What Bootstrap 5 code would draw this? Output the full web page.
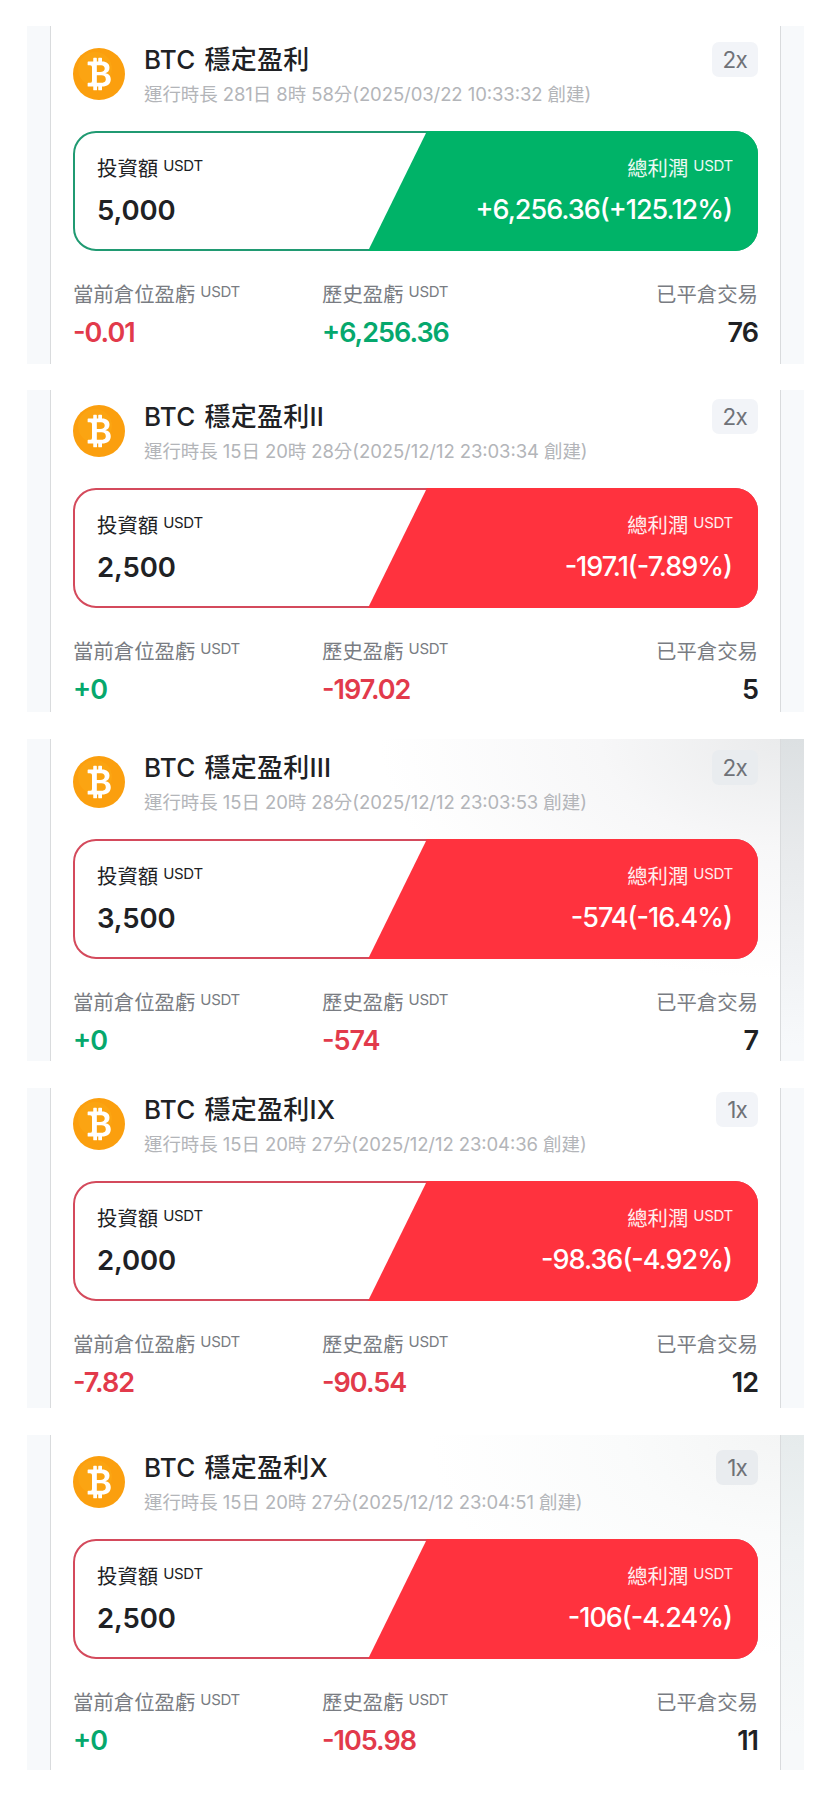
<!DOCTYPE html>
<html lang="zh-Hant">
<head>
<meta charset="utf-8">
<meta name="viewport" content="width=device-width, initial-scale=1">
<title>BTC 穩定盈利</title>
<link href="https://cdn.jsdelivr.net/npm/bootstrap@5.3.0/dist/css/bootstrap.min.css" rel="stylesheet">
<style>
body{background:#fff;color:#202124;font-family:Inter,"Noto Sans CJK TC",sans-serif;font-feature-settings:"case";padding:26px 26px 26px 27px}
.bot-frame{background:#f7f9fb;padding:0 23px;overflow:hidden;margin-bottom:27px}
.bot-body{background:#fff;border:solid #d9dbdd;border-width:0 1px;padding:0 22px;height:100%}
.h-a{height:338px;margin-bottom:26px}.h-a .bot-body{padding-top:16px}
.h-b{height:322px}.h-b .bot-body{padding-top:9px}
.h-c{height:322px}.h-c .bot-body{padding-top:11px}
.h-d{height:320px}.h-d .bot-body{padding-top:4px}
.h-e{height:335px;margin-bottom:0}.h-e .bot-body{padding-top:15px}
.h-c{background:linear-gradient(180deg,#dce0e2,#e8eaec 35%,#f7f9fb 95%)}
.h-c .bot-body{background:radial-gradient(ellipse 400px 240px at 100% 0,#eaebec,#f7f7f8 45%,#fff)}
.h-e{background:linear-gradient(180deg,#e6ebec,#eff3f4 35%,#f7f9fa 90%)}
.h-e .bot-body{background:radial-gradient(ellipse 350px 220px at 100% 0,#f4f5f5,#fafbfb 45%,#fff)}
.bot-frame.h-c,.bot-frame.h-e{background-size:50% 100%;background-position:right;background-repeat:no-repeat;background-color:#f7f9fb}
.bot-head{height:89px}
.coin{width:52px;height:52px;margin-top:6px;margin-right:19px}
.bot-title{font-size:26px;line-height:36px;font-weight:500;white-space:nowrap;letter-spacing:.2px;word-spacing:2px}
.bot-time{font-size:18.5px;line-height:28px;color:#b3b5b9;white-space:nowrap;margin-top:2px;letter-spacing:-.08px}
.lever{background:#f2f4f8;color:#6f7278;border-radius:7px;height:35px;line-height:35px;font-size:22.5px;letter-spacing:-.8px;padding:0 11px}
.h-c .lever,.h-e .lever{background:#e9ecef}
.panel{--tone:#00b368;--edge:#209a72;height:120px;border:2px solid var(--edge);border-radius:23px;position:relative;padding:21px 23px 0 22px;background:#fff}
.panel.down{--tone:#ff323e;--edge:#d44a5c}
.panel::before{content:"";position:absolute;inset:-2px;border-radius:23px;background:var(--tone);clip-path:polygon(354px 0,100% 0,100% 100%,295px 100%)}
.panel>*{position:relative}
.lbl{font-size:20.4px;line-height:30px;height:30px;white-space:nowrap}
.unit{font-size:15px;position:relative;top:-5px;margin-left:5px;letter-spacing:-.3px}
.num{font-size:27.5px;line-height:36px;font-weight:600;white-space:nowrap;letter-spacing:-.1px}
.panel .num{margin-top:8px}
.panel .text-end .num{font-size:27px;letter-spacing:-1px;margin-right:1px;font-weight:500}
.panel .text-end .lbl{opacity:.92}
.stats{padding-top:29px}
.stats .lbl{color:#797c82}
.stats .num{font-size:27px;margin-top:5px;letter-spacing:-1px}
.stats>:first-child{width:249px}
.pos{color:#06a86d}.neg{color:#e23a4b}
</style>
</head>
<body>
<svg class="d-none">
<symbol id="btc" viewBox="0 0 52 52"><circle cx="26" cy="26" r="26" fill="#fb9f0e"/><circle cx="22" cy="21" r="17" fill="#fdaf1b" opacity=".35"/><path fill="#fff" transform="translate(6.5 6)scale(2.5)" d="M5.5 13v1.25c0 .138.112.25.25.25h1a.25.25 0 0 0 .25-.25V13h.5v1.25c0 .138.112.25.25.25h1a.25.25 0 0 0 .25-.25V13h.084c1.992 0 3.416-1.033 3.416-2.82 0-1.502-1.007-2.323-2.186-2.44v-.088c.97-.242 1.683-.974 1.683-2.19C11.997 3.93 10.847 3 9.092 3H9V1.75a.25.25 0 0 0-.25-.25h-1a.25.25 0 0 0-.25.25V3h-.573V1.75a.25.25 0 0 0-.25-.25H5.75a.25.25 0 0 0-.25.25V3l-1.998.011a.25.25 0 0 0-.25.25v.989c0 .137.11.25.248.25l.755-.005a.75.75 0 0 1 .745.75v5.505a.75.75 0 0 1-.75.75l-.748.011a.25.25 0 0 0-.25.25v1c0 .138.112.25.25.25L5.5 13zm1.427-8.513h1.719c.906 0 1.438.498 1.438 1.312 0 .871-.575 1.362-1.877 1.362h-1.28V4.487zm0 4.051h1.84c1.137 0 1.756.58 1.756 1.524 0 .953-.626 1.45-2.158 1.45H6.927V8.539z"/></symbol>
</svg>

<section class="bot-frame h-a"><div class="bot-body">
 <div class="bot-head d-flex align-items-start"><svg class="coin flex-shrink-0"><use href="#btc"/></svg>
  <div class="flex-grow-1"><div class="bot-title">BTC 穩定盈利</div><div class="bot-time">運行時長 281日 8時 58分(2025/03/22 10:33:32 創建)</div></div><span class="lever">2x</span></div>
 <div class="panel d-flex justify-content-between"><div><div class="lbl">投資額<span class="unit">USDT</span></div><div class="num">5,000</div></div>
  <div class="text-end text-white"><div class="lbl">總利潤<span class="unit">USDT</span></div><div class="num">+6,256.36(+125.12%)</div></div></div>
 <div class="stats d-flex"><div><div class="lbl">當前倉位盈虧<span class="unit">USDT</span></div><div class="num neg">-0.01</div></div>
  <div><div class="lbl">歷史盈虧<span class="unit">USDT</span></div><div class="num pos">+6,256.36</div></div>
  <div class="ms-auto text-end"><div class="lbl">已平倉交易</div><div class="num">76</div></div></div>
</div></section>

<section class="bot-frame h-b"><div class="bot-body">
 <div class="bot-head d-flex align-items-start"><svg class="coin flex-shrink-0"><use href="#btc"/></svg>
  <div class="flex-grow-1"><div class="bot-title">BTC 穩定盈利II</div><div class="bot-time">運行時長 15日 20時 28分(2025/12/12 23:03:34 創建)</div></div><span class="lever">2x</span></div>
 <div class="panel down d-flex justify-content-between"><div><div class="lbl">投資額<span class="unit">USDT</span></div><div class="num">2,500</div></div>
  <div class="text-end text-white"><div class="lbl">總利潤<span class="unit">USDT</span></div><div class="num">-197.1(-7.89%)</div></div></div>
 <div class="stats d-flex"><div><div class="lbl">當前倉位盈虧<span class="unit">USDT</span></div><div class="num pos">+0</div></div>
  <div><div class="lbl">歷史盈虧<span class="unit">USDT</span></div><div class="num neg">-197.02</div></div>
  <div class="ms-auto text-end"><div class="lbl">已平倉交易</div><div class="num">5</div></div></div>
</div></section>

<section class="bot-frame h-c"><div class="bot-body">
 <div class="bot-head d-flex align-items-start"><svg class="coin flex-shrink-0"><use href="#btc"/></svg>
  <div class="flex-grow-1"><div class="bot-title">BTC 穩定盈利III</div><div class="bot-time">運行時長 15日 20時 28分(2025/12/12 23:03:53 創建)</div></div><span class="lever">2x</span></div>
 <div class="panel down d-flex justify-content-between"><div><div class="lbl">投資額<span class="unit">USDT</span></div><div class="num">3,500</div></div>
  <div class="text-end text-white"><div class="lbl">總利潤<span class="unit">USDT</span></div><div class="num">-574(-16.4%)</div></div></div>
 <div class="stats d-flex"><div><div class="lbl">當前倉位盈虧<span class="unit">USDT</span></div><div class="num pos">+0</div></div>
  <div><div class="lbl">歷史盈虧<span class="unit">USDT</span></div><div class="num neg">-574</div></div>
  <div class="ms-auto text-end"><div class="lbl">已平倉交易</div><div class="num">7</div></div></div>
</div></section>

<section class="bot-frame h-d"><div class="bot-body">
 <div class="bot-head d-flex align-items-start"><svg class="coin flex-shrink-0"><use href="#btc"/></svg>
  <div class="flex-grow-1"><div class="bot-title">BTC 穩定盈利IX</div><div class="bot-time">運行時長 15日 20時 27分(2025/12/12 23:04:36 創建)</div></div><span class="lever">1x</span></div>
 <div class="panel down d-flex justify-content-between"><div><div class="lbl">投資額<span class="unit">USDT</span></div><div class="num">2,000</div></div>
  <div class="text-end text-white"><div class="lbl">總利潤<span class="unit">USDT</span></div><div class="num">-98.36(-4.92%)</div></div></div>
 <div class="stats d-flex"><div><div class="lbl">當前倉位盈虧<span class="unit">USDT</span></div><div class="num neg">-7.82</div></div>
  <div><div class="lbl">歷史盈虧<span class="unit">USDT</span></div><div class="num neg">-90.54</div></div>
  <div class="ms-auto text-end"><div class="lbl">已平倉交易</div><div class="num">12</div></div></div>
</div></section>

<section class="bot-frame h-e"><div class="bot-body">
 <div class="bot-head d-flex align-items-start"><svg class="coin flex-shrink-0"><use href="#btc"/></svg>
  <div class="flex-grow-1"><div class="bot-title">BTC 穩定盈利X</div><div class="bot-time">運行時長 15日 20時 27分(2025/12/12 23:04:51 創建)</div></div><span class="lever">1x</span></div>
 <div class="panel down d-flex justify-content-between"><div><div class="lbl">投資額<span class="unit">USDT</span></div><div class="num">2,500</div></div>
  <div class="text-end text-white"><div class="lbl">總利潤<span class="unit">USDT</span></div><div class="num">-106(-4.24%)</div></div></div>
 <div class="stats d-flex"><div><div class="lbl">當前倉位盈虧<span class="unit">USDT</span></div><div class="num pos">+0</div></div>
  <div><div class="lbl">歷史盈虧<span class="unit">USDT</span></div><div class="num neg">-105.98</div></div>
  <div class="ms-auto text-end"><div class="lbl">已平倉交易</div><div class="num">11</div></div></div>
</div></section>
<script src="https://cdn.jsdelivr.net/npm/bootstrap@5.3.0/dist/js/bootstrap.bundle.min.js"></script>
</body>
</html>
